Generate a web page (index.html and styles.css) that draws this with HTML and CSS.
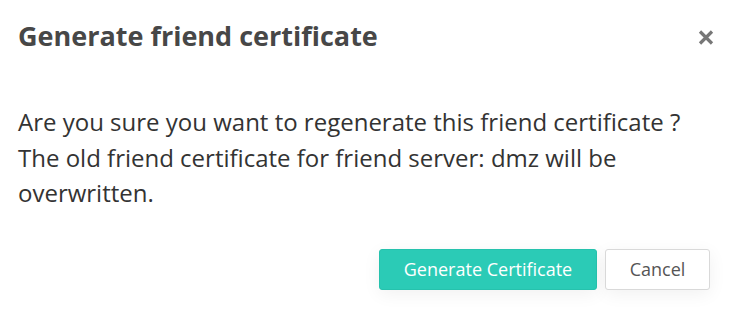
FILE: index.html
```html
<!DOCTYPE html>
<html>
<head>
<meta charset="utf-8">
<link rel="stylesheet" href="styles.css">
</head>
<body>
<div class="modal">
  <div class="header">
    <h1 class="title">Generate friend certificate</h1>
    <button class="close" aria-label="Close">
      <svg width="16" height="15" viewBox="0 0 16 15"><path d="M2 1.5L14 13.5M14 1.5L2 13.5" stroke="#777" stroke-width="3.2" stroke-linecap="butt"/></svg>
    </button>
  </div>
  <div class="body">
    <p class="message">Are you sure you want to regenerate this friend certificate ?<br>The old friend certificate for friend server: dmz will be overwritten.</p>
  </div>
  <div class="footer">
    <button class="btn btn-primary">Generate Certificate</button>
    <button class="btn btn-default">Cancel</button>
  </div>
</div>
</body>
</html>
```
FILE: styles.css
```css
* { box-sizing: border-box; }
html, body { margin: 0; padding: 0; background: #fff; }
body { font-family: "Open Sans", "Noto Sans", sans-serif; width: 739px; height: 309px; overflow: hidden; }
.modal { width: 739px; }
.header { display: flex; justify-content: space-between; align-items: flex-start; padding: 18px 25px 0 18px; height: 96px; }
.title { margin: 0; font-size: 27px; font-weight: 700; color: #474747; line-height: 36px; }
.close { border: 0; background: none; padding: 0; margin-top: 12px; width: 16px; height: 15px; display: flex; }
.body { padding: 8px 18px 0 18px; }
.message { margin: 0; font-size: 24px; line-height: 35.5px; color: #333; width: 690px; }
.footer { display: flex; justify-content: flex-end; gap: 8px; padding: 38px 29px 0 0; }
.btn { font-family: inherit; font-size: 18px; height: 41px; border-radius: 3px; padding: 0; cursor: pointer; box-shadow: 0 4px 18px rgba(0,0,0,0.06); }
.btn-primary { background: #2bcbb6; color: #fff; border: 1px solid #26c2ad; width: 218px; }
.btn-default { background: #fff; color: #555; border: 1px solid #d9d9d9; width: 105px; }
```
